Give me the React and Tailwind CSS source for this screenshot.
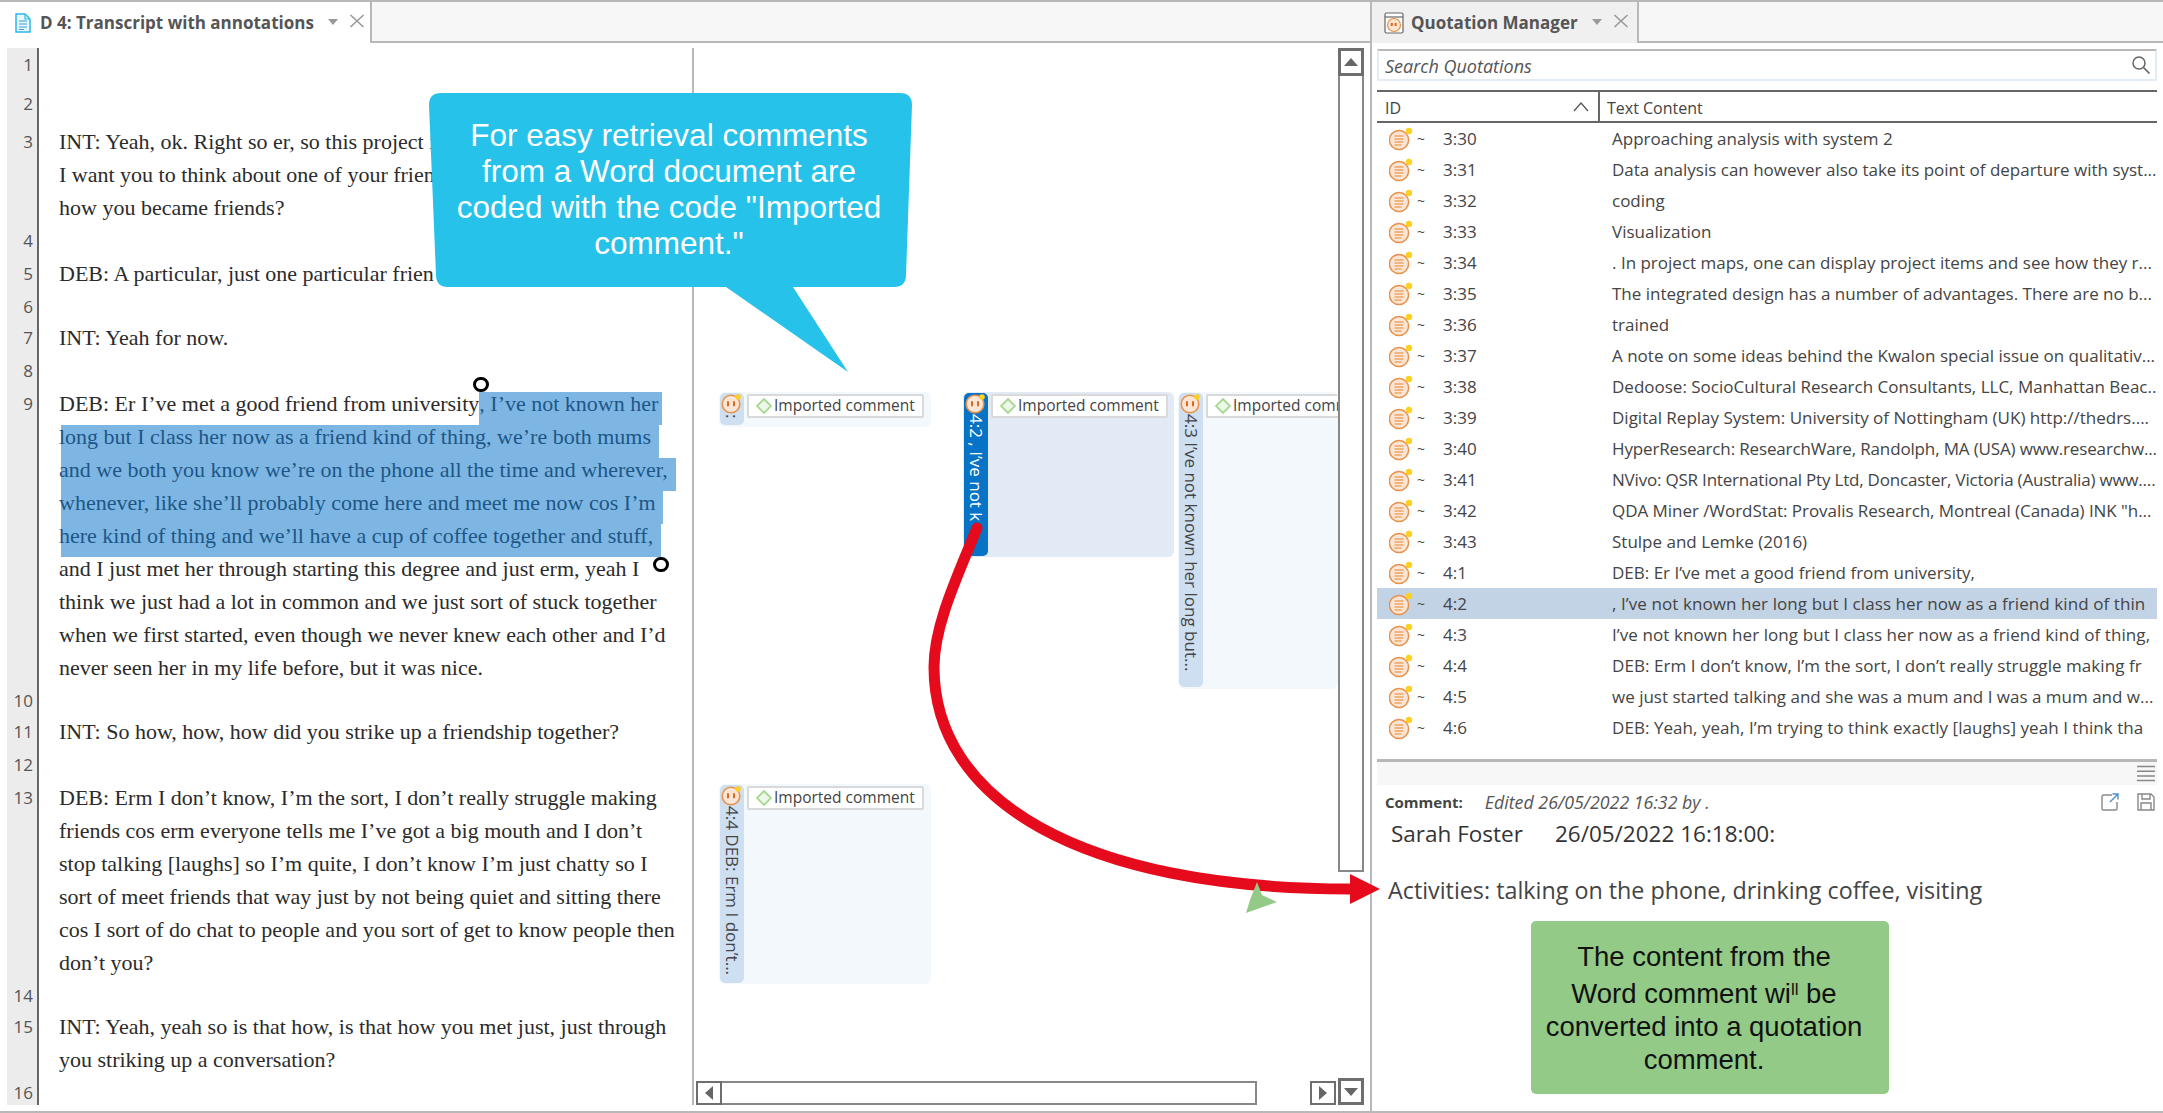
import React from "react";

const ui = { fontFamily: '"Open Sans", "Noto Sans", sans-serif' };

const DocIcon = () => (
  <svg width="18" height="20" viewBox="0 0 18 20" className="shrink-0">
    <path d="M2 1h9l5 5v13H2z" fill="#e6f7fd" stroke="#2bb8ea" strokeWidth="1.5" />
    <path d="M11 1v5h5" fill="none" stroke="#2bb8ea" strokeWidth="1.2" />
    <path d="M5 8h8M5 11h8M5 14h8M5 16.5h5" stroke="#3a9fd8" strokeWidth="1" />
  </svg>
);

const QmIcon = () => (
  <svg width="20" height="22" viewBox="0 0 20 22" className="shrink-0">
    <rect x="1" y="1" width="18" height="20" rx="1.5" fill="#fff" stroke="#666" strokeWidth="1.2" />
    <path d="M1 5h18" stroke="#666" strokeWidth="1.2" />
    <circle cx="10" cy="13" r="6.5" fill="#fbe4d0" stroke="#e8914a" strokeWidth="1.2" />
    <path d="M7.8 11v3M11.6 11v3" stroke="#d9691e" strokeWidth="2" />
  </svg>
);

const RowIcon = () => (
  <svg width="24" height="26" viewBox="0 0 24 26" className="shrink-0">
    <circle cx="10" cy="14" r="9.6" fill="#fbe6d6" stroke="#e8914a" strokeWidth="1.5" />
    <path d="M5.5 10h9M5.5 13h9M5.5 16h9M5.5 19h7" stroke="#e8842e" strokeWidth="1.2" />
    <circle cx="20" cy="5" r="3.2" fill="#fdd023" />
  </svg>
);

const FaceIcon = () => (
  <svg width="24" height="22" viewBox="0 0 24 22" className="shrink-0">
    <circle cx="11" cy="11" r="8.8" fill="#fbe6d6" stroke="#e8914a" strokeWidth="1.6" />
    <path d="M8 9v3.5M14 9v3.5" stroke="#d9691e" strokeWidth="2" strokeLinecap="round" />
    <circle cx="18" cy="4" r="2.8" fill="#fdd023" />
  </svg>
);

const Chip = ({ clip }) => (
  <div
    className={`flex items-center h-[24px] bg-white border-2 border-[#d9d9d9] rounded-[2px] pl-[6px] shrink-0 whitespace-nowrap overflow-hidden ${clip ? "w-[150px] border-r-0" : "w-[177px]"}`}
  >
    <svg width="18" height="18" viewBox="0 0 18 18" className="shrink-0 mr-[1px]">
      <path d="M9 2l7 7-7 7-7-7z" fill="#eef8ea" stroke="#a8d892" strokeWidth="1.8" />
    </svg>
    <span className="text-[15.5px] text-[#444] leading-none">Imported comment</span>
  </div>
);

const Card = ({ x, y, w, h, stripText, stripH, selected, body, clip }) => (
  <div
    className={`absolute flex rounded-[6px] p-[1px] gap-[3px] overflow-hidden ${body || "bg-[#f3f8fc]"}`}
    style={{ left: x, top: y, width: w, height: h }}
  >
    <div
      className={`w-[24px] shrink-0 rounded-[5px] flex flex-col items-center overflow-hidden ${selected ? "bg-[#0773c6] text-white" : "bg-[#cfdff2] text-[#444]"}`}
      style={{ height: stripH }}
    >
      <FaceIcon />
      <span className="[writing-mode:vertical-rl] text-[17px] leading-[24px] whitespace-nowrap mt-[-1px]">{stripText}</span>
    </div>
    <div className="pt-[1px]">
      <Chip clip={clip} />
    </div>
  </div>
);

const Hl = ({ w, first, children }) => (
  <span
    className={`relative top-[5px] inline-block h-[33px] bg-[#7eb6e3] text-[#1d5686] align-top ${first ? "" : "ml-[2px]"}`}
    style={{ width: w }}
  >
    <span className={`relative top-[-5px] ${first ? "" : "ml-[-2px]"} whitespace-nowrap`}>{children}</span>
  </span>
);

const rows = [
  { n: 1, h: 39, t: [] },
  { n: 2, h: 38, t: [] },
  { n: 3, h: 99, t: ["INT: Yeah, ok. Right so er, so this project i", "I want you to think about one of your frien", "how you became friends?"] },
  { n: 4, h: 33, t: [] },
  { n: 5, h: 33, t: ["DEB: A particular, just one particular frien"] },
  { n: 6, h: 31, t: [] },
  { n: 7, h: 33, t: ["INT: Yeah for now."] },
  { n: 8, h: 33, t: [] },
  {
    n: 9,
    h: 297,
    t: [
      <>DEB: Er I’ve met a good friend from university<Hl w={183} first>, I’ve not known her</Hl></>,
      <Hl w={598}>long but I class her now as a friend kind of thing, we’re both mums</Hl>,
      <Hl w={615}>and we both you know we’re on the phone all the time and wherever,</Hl>,
      <Hl w={602}>whenever, like she’ll probably come here and meet me now cos I’m</Hl>,
      <Hl w={600}>here kind of thing and we’ll have a cup of coffee together and stuff,</Hl>,
      "and I just met her through starting this degree and just erm, yeah I",
      "think we just had a lot in common and we just sort of stuck together",
      "when we first started, even though we never knew each other and I’d",
      "never seen her in my life before, but it was nice.",
    ],
  },
  { n: 10, h: 31, t: [] },
  { n: 11, h: 33, t: ["INT: So how, how, how did you strike up a friendship together?"] },
  { n: 12, h: 33, t: [] },
  {
    n: 13,
    h: 198,
    t: [
      "DEB: Erm I don’t know, I’m the sort, I don’t really struggle making",
      "friends cos erm everyone tells me I’ve got a big mouth and I don’t",
      "stop talking [laughs] so I’m quite, I don’t know I’m just chatty so I",
      "sort of meet friends that way just by not being quiet and sitting there",
      "cos I sort of do chat to people and you sort of get to know people then",
      "don’t you?",
    ],
  },
  { n: 14, h: 31, t: [] },
  { n: 15, h: 66, t: ["INT: Yeah, yeah so is that how, is that how you met just, just through", "you striking up a conversation?"] },
  { n: 16, h: 29, t: [] },
];

const quotes = [
  ["3:30", "Approaching analysis with system 2"],
  ["3:31", "Data analysis can however also take its point of departure with syst..."],
  ["3:32", "coding"],
  ["3:33", "Visualization"],
  ["3:34", ". In project maps, one can display project items and see how they r..."],
  ["3:35", "The integrated design has a number of advantages. There are no b..."],
  ["3:36", "trained"],
  ["3:37", "A note on some ideas behind the Kwalon special issue on qualitativ..."],
  ["3:38", "Dedoose: SocioCultural Research Consultants, LLC, Manhattan Beac..."],
  ["3:39", "Digital Replay System: University of Nottingham (UK) http://thedrs...."],
  ["3:40", "HyperResearch: ResearchWare, Randolph, MA (USA) www.researchw...", "tracking-[-0.15px]"],
  ["3:41", "NVivo: QSR International Pty Ltd, Doncaster, Victoria (Australia) www....", "tracking-[-0.2px]"],
  ["3:42", "QDA Miner /WordStat: Provalis Research, Montreal (Canada) INK \"h...", "tracking-[-0.05px]"],
  ["3:43", "Stulpe and Lemke (2016)"],
  ["4:1", "DEB: Er I’ve met a good friend from university,"],
  ["4:2", ", I’ve not known her long but I class her now as a friend kind of thin", "tracking-[0.08px]"],
  ["4:3", "I’ve not known her long but I class her now as a friend kind of thing,", "tracking-[0.08px]"],
  ["4:4", "DEB: Erm I don’t know, I’m the sort, I don’t really struggle making fr", "tracking-[0.05px]"],
  ["4:5", "we just started talking and she was a mum and I was a mum and w..."],
  ["4:6", "DEB: Yeah, yeah, I’m trying to think exactly [laughs] yeah I think tha", "tracking-[0.05px]"],
];

const Tri = ({ d }) => (
  <svg width="16" height="20" viewBox="0 0 16 20">
    <path d={d} fill="#666" />
  </svg>
);

const TabHead = ({ icon, title, w, active }) => (
  <div className="h-[41px] bg-[#f7f7f7] border-b-2 border-[#b8b8b8] flex">
    <div
      className={`h-[41px] flex items-center border-r-2 border-[#b8b8b8] ${active ? "bg-white pl-[14px]" : "bg-[#f0f0f0] pl-[12px]"}`}
      style={{ width: w }}
    >
      {icon}
      <span className={`font-bold text-[17px] text-[#555] whitespace-nowrap pt-[1px] ${active ? "ml-[8px]" : "ml-[7px]"}`}>{title}</span>
      <svg width="12" height="8" viewBox="0 0 12 8" className="ml-[13px] mt-[-1px]">
        <path d="M1 1h10L6 7z" fill="#999" />
      </svg>
      <svg width="16" height="14" viewBox="0 0 16 14" className="ml-[10px] mt-[-3px]">
        <path d="M1.5 1l13 12M14.5 1l-13 12" stroke="#999" strokeWidth="1.6" />
      </svg>
    </div>
  </div>
);

export default function App() {
  return (
    <div className="relative w-[2163px] h-[1113px] overflow-hidden bg-white flex flex-col text-[#444]" style={ui}>
      <div className="h-[2px] bg-[#b8b8b8] shrink-0" />
      <div className="flex flex-1 min-h-0">
        {/* left pane */}
        <div className="w-[1370px] shrink-0 flex flex-col">
          <TabHead icon={<DocIcon />} title="D 4: Transcript with annotations" w={372} active />
          <div className="flex flex-1 min-h-0 pl-[7px] pt-[5px] pb-[6px]">
            <div className="w-[32px] shrink-0 bg-[#ececec] border-r-2 border-[#666]">
              {rows.map((r) => (
                <div key={r.n} style={{ height: r.h }} className="text-right pr-[4px] pt-[5px] text-[17px] leading-[24px] text-[#555]">
                  {r.n}
                </div>
              ))}
            </div>
            <div className="w-[653px] shrink-0 pl-[20px] overflow-hidden" style={{ fontFamily: '"Liberation Serif", serif' }}>
              {rows.map((r) => (
                <div key={r.n} style={{ height: r.h }} className="text-[22px] leading-[33px] text-[#2b2b2b]">
                  {r.t.map((l, i) => (
                    <div key={i} className="whitespace-nowrap h-[33px]">
                      {l}
                    </div>
                  ))}
                </div>
              ))}
            </div>
            <div className="flex-1 min-w-0 flex border-l-2 border-[#b8b8b8]">
              <div className="flex-1 min-w-0 flex flex-col">
                <div className="relative flex-1 min-h-0 overflow-hidden">
                  <Card x={25} y={344} w={212} h={35} stripH={32} stripText=":" />
                  <Card x={269} y={344} w={211} h={165} stripH={163} stripText="4:2 , I’ve not k" selected body="bg-[#e2ebf5]" />
                  <Card x={484} y={344} w={160} h={297} stripH={294} stripText="4:3 I’ve not known her long but..." clip />
                  <Card x={25} y={736} w={212} h={200} stripH={198} stripText="4:4 DEB: Erm I don’t..." />
                </div>
                <div className="h-[24px] flex pl-[2px] pr-[2px] shrink-0 justify-between">
                  <div className="flex">
                    <div className="w-[26px] border-2 border-[#6e6e6e] flex items-center justify-center">
                      <Tri d="M12 3v14L4 10z" />
                    </div>
                    <div className="w-[535px] border-2 border-l-0 border-[#888]" />
                  </div>
                  <div className="w-[26px] border-2 border-[#6e6e6e] flex items-center justify-center">
                    <Tri d="M4 3v14l8-7z" />
                  </div>
                </div>
              </div>
              <div className="w-[26px] shrink-0 flex flex-col mr-[6px]">
                <div className="h-[28px] border-[3px] border-[#6e6e6e] flex items-center justify-center">
                  <svg width="16" height="10" viewBox="0 0 16 10">
                    <path d="M8 1l7 8H1z" fill="#666" />
                  </svg>
                </div>
                <div className="h-[796px] border-2 border-t-0 border-[#888]" />
                <div className="flex-1" />
                <div className="h-[27px] border-[3px] border-[#6e6e6e] flex items-center justify-center">
                  <svg width="16" height="10" viewBox="0 0 16 10">
                    <path d="M1 1h14L8 9z" fill="#666" />
                  </svg>
                </div>
              </div>
            </div>
          </div>
        </div>
        {/* right pane */}
        <div className="flex-1 min-w-0 flex flex-col border-l-2 border-[#b8b8b8]">
          <TabHead icon={<QmIcon />} title="Quotation Manager" w={267} />
          <div className="flex-1 min-h-0 flex flex-col pl-[5px] pr-[6px]">
            <div className="mt-[6px] h-[32px] border-2 border-[#e3ebf3] border-t-[#b8b8b8] flex items-center pl-[6px] pr-[4px] justify-between shrink-0">
              <span className="italic text-[18px] leading-[24px] text-[#555] pt-[1px]">Search Quotations</span>
              <svg width="20" height="20" viewBox="0 0 20 20">
                <circle cx="8" cy="8" r="6" fill="none" stroke="#666" strokeWidth="1.5" />
                <path d="M12.5 12.5l6 6" stroke="#666" strokeWidth="1.7" />
              </svg>
            </div>
            <div className="mt-[9px] h-[33px] border-y-2 border-[#666] flex shrink-0 text-[16px] text-[#444]">
              <div className="w-[223px] border-r-2 border-[#666] flex items-center justify-between pl-[8px] pr-[9px]">
                <span className="pt-[2px]">ID</span>
                <svg width="16" height="10" viewBox="0 0 16 10">
                  <path d="M1 9l7-8 7 8" fill="none" stroke="#555" strokeWidth="1.3" />
                </svg>
              </div>
              <div className="pl-[7px] pt-[2px] flex items-center">Text Content</div>
            </div>
            <div className="h-[636px] shrink-0 overflow-hidden">
              {quotes.map(([id, text, tr]) => (
                <div key={id} className={`h-[31px] flex items-center text-[17px] text-[#444] ${id === "4:2" ? "bg-[#c2d3e6]" : ""}`}>
                  <div className="w-[235px] shrink-0 flex items-center pl-[12px]">
                    <RowIcon />
                    <span className="ml-[4px] w-[26px] text-[14px]">~</span>
                    <span>{id}</span>
                  </div>
                  <span className={`whitespace-nowrap ${tr || ""}`}>{text}</span>
                </div>
              ))}
            </div>
            <div className="h-[26px] shrink-0 border-t-[3px] border-[#b8b8b8] bg-[#f7f7f7] flex items-center justify-end pr-[2px]">
              <svg width="18" height="17" viewBox="0 0 18 17">
                <path d="M0 1.5h18M0 6.2h18M0 11h18M0 15.5h18" stroke="#888" strokeWidth="1.6" />
              </svg>
            </div>
            <div className="mt-[6px] h-[22px] flex items-center pl-[8px] justify-between shrink-0">
              <div className="flex items-center whitespace-nowrap">
                <span className="font-bold text-[15px] text-[#444]">Comment:</span>
                <span className="italic ml-[22px] text-[17.8px] text-[#555]">Edited 26/05/2022 16:32 by .</span>
              </div>
              <div className="flex items-center gap-[18px] pr-[2px]">
                <svg width="18" height="18" viewBox="0 0 18 18">
                  <path d="M11 2H2.5A1.5 1.5 0 001 3.5v12A1.5 1.5 0 002.5 17h12a1.5 1.5 0 001.5-1.5V9" fill="none" stroke="#888" strokeWidth="1.4" />
                  <path d="M9 9l7.5-7.5M11.5 1h5.5v5.5" fill="none" stroke="#4a90d0" strokeWidth="1.4" />
                </svg>
                <svg width="18" height="18" viewBox="0 0 18 18">
                  <path d="M2 1h12l3 3v13H1V1z" fill="none" stroke="#888" strokeWidth="1.4" />
                  <path d="M5 1v5h8V1M4 17v-7h10v7" fill="none" stroke="#888" strokeWidth="1.4" />
                </svg>
              </div>
            </div>
            <div className="pl-[14px] mt-[6px] text-[22.5px] leading-[30px] text-[#333] whitespace-nowrap">
              <span>Sarah Foster</span>
              <span className="ml-[32px]">26/05/2022 16:18:00:</span>
            </div>
            <div className="pl-[11px] mt-[26px] text-[23.3px] leading-[30px] text-[#444] whitespace-nowrap">
              Activities: talking on the phone, drinking coffee, visiting
            </div>
          </div>
        </div>
      </div>
      <div className="h-[2px] bg-[#b8b8b8] shrink-0" />

      {/* callout overlay */}
      <svg className="absolute left-0 top-0 pointer-events-none" width="2163" height="1113">
        <path
          d="M441 93H900Q912 93 912 105L906 275Q906 287 894 287H793L848 372L726 287H448Q436 287 436 275L429 105Q429 93 441 93Z"
          fill="#26c2ea"
        />
        <path
          d="M977 528C958 575 934 625 934 667C934 800 1080 889 1350 889"
          fill="none"
          stroke="#e60b1c"
          strokeWidth="11"
          strokeLinecap="round"
        />
        <path d="M1350 874L1380 889L1350 904Z" fill="#e60b1c" />
        <path d="M1257 882L1262 895L1277 902L1246 913L1250 900Z" fill="#93ca87" />
      </svg>
      <div
        className="absolute left-[432px] top-[117px] w-[474px] text-center text-[31.5px] leading-[36px] text-white"
        style={{ fontFamily: '"Liberation Sans", sans-serif' }}
      >
        For easy retrieval comments
        <br />
        from a Word document are
        <br />
        coded with the code "Imported
        <br />
        comment."
      </div>
      <div
        className="absolute left-[1531px] top-[921px] w-[358px] h-[173px] pr-[12px] rounded-[5px] bg-[#93ca87] flex flex-col justify-center text-center text-[27.5px] leading-[33px] text-[#111]"
        style={{ fontFamily: '"Liberation Sans", sans-serif' }}
      >
        <div>The content from the</div>
        <div>
          Word comment wi<span className="text-[17px] align-[8px]">ll</span> be
        </div>
        <div>converted into a quotation</div>
        <div>comment.</div>
      </div>
      <div className="absolute left-[473px] top-[377px] w-[16px] h-[15px] rounded-full border-[3px] border-black bg-white" />
      <div className="absolute left-[653px] top-[557px] w-[16px] h-[15px] rounded-full border-[3px] border-black bg-white" />
    </div>
  );
}
